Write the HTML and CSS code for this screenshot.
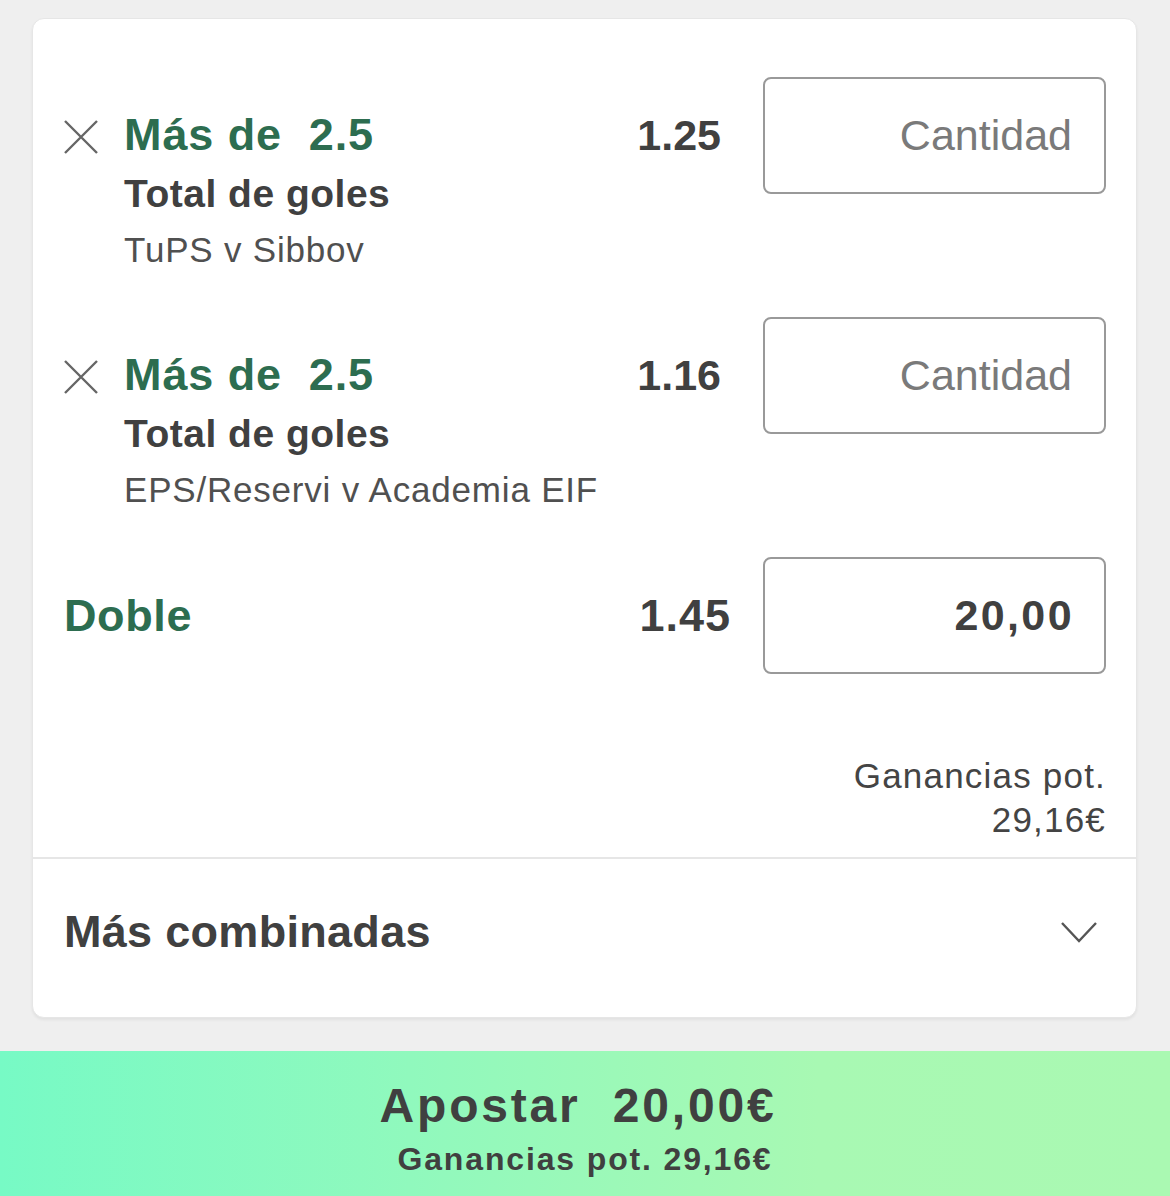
FILE: index.html
```html
<!DOCTYPE html>
<html lang="es">
<head>
<meta charset="utf-8">
<title>Boleto</title>
<link rel="stylesheet" href="styles.css">
</head>
<body>
<div class="page">
  <div class="card">
    <div class="bets">
      <div class="bet">
        <div class="bet-info">
          <svg class="remove" viewBox="0 0 34 34" width="34" height="34"><path d="M1 1 L33 33 M33 1 L1 33" stroke="#666" stroke-width="2.4" fill="none"/></svg>
          <div class="bet-text">
            <div class="title">Más de&nbsp; 2.5</div>
            <div class="market">Total de goles</div>
            <div class="match">TuPS v Sibbov</div>
          </div>
        </div>
        <div class="odds">1.25</div>
        <div class="stake placeholder">Cantidad</div>
      </div>
      <div class="bet">
        <div class="bet-info">
          <svg class="remove" viewBox="0 0 34 34" width="34" height="34"><path d="M1 1 L33 33 M33 1 L1 33" stroke="#666" stroke-width="2.4" fill="none"/></svg>
          <div class="bet-text">
            <div class="title">Más de&nbsp; 2.5</div>
            <div class="market">Total de goles</div>
            <div class="match">EPS/Reservi v Academia EIF</div>
          </div>
        </div>
        <div class="odds">1.16</div>
        <div class="stake placeholder">Cantidad</div>
      </div>
      <div class="combo">
        <div class="combo-name">Doble</div>
        <div class="odds odds-combo">1.45</div>
        <div class="stake value">20,00</div>
      </div>
      <div class="potential">
        <div>Ganancias pot.</div>
        <div>29,16€</div>
      </div>
    </div>
    <div class="more">
      <div class="more-label">Más combinadas</div>
      <svg class="chevron" viewBox="0 0 36 21" width="36" height="21"><path d="M1 1 L18 19 L35 1" stroke="#555" stroke-width="2.4" fill="none"/></svg>
    </div>
  </div>
  <div class="place-bet">
    <div class="place-main">Apostar&nbsp; 20,00€</div>
    <div class="place-sub">Ganancias pot. 29,16€</div>
  </div>
</div>
</body>
</html>
```
FILE: styles.css
```css
* { box-sizing: border-box; }
html, body {
  margin: 0;
  padding: 0;
  background: #efefef;
  font-family: "Liberation Sans", Arial, sans-serif;
  color: #404040;
}
.page {
  width: 1170px;
  height: 1196px;
  display: flex;
  flex-direction: column;
  padding-top: 18px;
}
.card {
  margin: 0 33px 0 32px;
  height: 1000px;
  background: #fff;
  border-radius: 12px;
  border: 1px solid #e6e6e6;
  box-shadow: 0 2px 3px rgba(0,0,0,0.06);
  display: flex;
  flex-direction: column;
}
.bets {
  padding: 58px 30px 15px 31px;
  border-bottom: 2px solid #e6e6e6;
}
.bet {
  display: flex;
  align-items: flex-start;
  height: 240px;
}
.bet-info {
  flex: 1;
  display: flex;
  align-items: flex-start;
}
.remove {
  flex: none;
  margin-top: 43px;
  margin-right: 26px;
}
.bet-text {
  padding-top: 32px;
}
.title {
  font-size: 45px;
  line-height: 52px;
  font-weight: 700;
  color: #2d6d50;
  letter-spacing: 0.9px;
}
.market {
  font-size: 39px;
  line-height: 66px;
  font-weight: 700;
  color: #404040;
  letter-spacing: 0.5px;
}
.match {
  font-size: 35px;
  line-height: 46px;
  color: #505050;
  letter-spacing: 0.8px;
}
.odds {
  height: 117px;
  display: flex;
  align-items: center;
  font-size: 43px;
  font-weight: 700;
  color: #404040;
  margin-right: 42px;
}
.stake {
  flex: none;
  width: 343px;
  height: 117px;
  border: 2px solid #999;
  border-radius: 8px;
  display: flex;
  align-items: center;
  justify-content: flex-end;
  padding-right: 32px;
  font-size: 43px;
}
.placeholder {
  color: #7a7a7a;
}
.value {
  font-weight: 700;
  color: #404040;
  letter-spacing: 2.4px;
  padding-right: 30px;
}
.combo {
  display: flex;
  align-items: center;
}
.combo-name {
  flex: 1;
  font-size: 45px;
  font-weight: 700;
  color: #2d6d50;
  letter-spacing: 0.6px;
}
.odds-combo {
  font-size: 45px;
  letter-spacing: 1px;
  margin-right: 32px;
}
.potential {
  margin-top: 80px;
  text-align: right;
  font-size: 35px;
  line-height: 44px;
  color: #444;
  letter-spacing: 1.2px;
}
.more {
  height: 146px;
  display: flex;
  align-items: center;
  justify-content: space-between;
  padding: 0 39px 0 31px;
}
.more-label {
  font-size: 45px;
  font-weight: 700;
  color: #404040;
  letter-spacing: 0.3px;
}
.place-bet {
  margin-top: 33px;
  flex: 1;
  background: linear-gradient(90deg, #77fac5 0%, #90f9bd 35%, #a8f9b3 70%, #aaf9b2 100%);
  display: flex;
  flex-direction: column;
  align-items: center;
  padding-top: 27px;
}
.place-main {
  font-size: 48px;
  line-height: 56px;
  font-weight: 700;
  color: #404040;
  letter-spacing: 2.8px;
  padding-right: 14px;
}
.place-sub {
  margin-top: 5px;
  font-size: 32px;
  line-height: 40px;
  font-weight: 700;
  color: #404040;
  letter-spacing: 1.85px;
}
```
